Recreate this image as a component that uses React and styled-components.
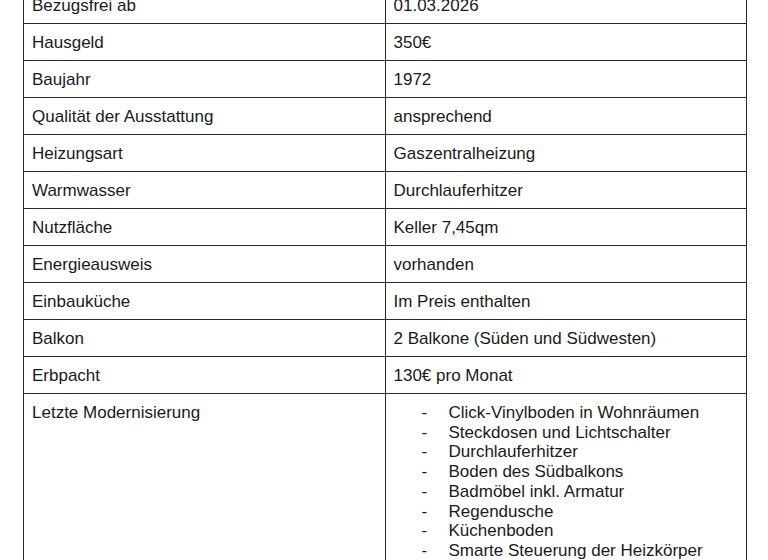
import React from 'react';
import styled, { createGlobalStyle } from 'styled-components';

const GlobalStyle = createGlobalStyle`
  html, body {
    margin: 0;
    padding: 0;
    background: #ffffff;
  }
  body {
    font-family: "Liberation Sans", Arial, sans-serif;
    color: #1a1a1a;
    overflow: hidden;
  }
`;

const rows = [
  ['Bezugsfrei ab', '01.03.2026'],
  ['Hausgeld', '350€'],
  ['Baujahr', '1972'],
  ['Qualität der Ausstattung', 'ansprechend'],
  ['Heizungsart', 'Gaszentralheizung'],
  ['Warmwasser', 'Durchlauferhitzer'],
  ['Nutzfläche', 'Keller 7,45qm'],
  ['Energieausweis', 'vorhanden'],
  ['Einbauküche', 'Im Preis enthalten'],
  ['Balkon', '2 Balkone (Süden und Südwesten)'],
  ['Erbpacht', '130€ pro Monat'],
];

const modernisations = [
  'Click-Vinylboden in Wohnräumen',
  'Steckdosen und Lichtschalter',
  'Durchlauferhitzer',
  'Boden des Südbalkons',
  'Badmöbel inkl. Armatur',
  'Regendusche',
  'Küchenboden',
  'Smarte Steuerung der Heizkörper',
];

const Page = styled.div`
  padding: 0 21px 0 23px;
`;

const Table = styled.table`
  width: 100%;
  margin-top: -14px;
  border-collapse: collapse;
  table-layout: fixed;
  font-size: 17px;
  line-height: 20px;
`;

const Cell = styled.td`
  border: 1px solid #2a2a2a;
  padding: 9px 8px 7px 8px;
  vertical-align: top;
  white-space: nowrap;
`;

const DashList = styled.ul`
  list-style: none;
  margin: 0;
  padding: 0 0 40px 28px;
`;

const Item = styled.li`
  display: flex;
  line-height: 19.7px;
`;

const Dash = styled.span`
  width: 27px;
  flex-shrink: 0;
`;

const App = () => {
  return (
    <>
      <GlobalStyle />
      <Page>
        <Table>
          <tbody>
            {rows.map(([label, value]) => (
              <tr key={label}>
                <Cell>{label}</Cell>
                <Cell>{value}</Cell>
              </tr>
            ))}
            <tr>
              <Cell>Letzte Modernisierung</Cell>
              <Cell>
                <DashList>
                  {modernisations.map((m) => (
                    <Item key={m}>
                      <Dash>-</Dash>
                      {m}
                    </Item>
                  ))}
                </DashList>
              </Cell>
            </tr>
          </tbody>
        </Table>
      </Page>
    </>
  );
};

export default App;
